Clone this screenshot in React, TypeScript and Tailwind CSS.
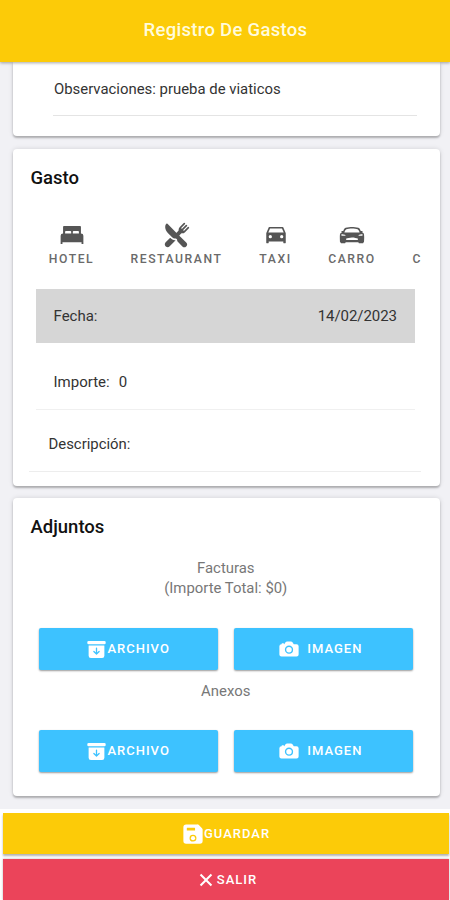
import type { ReactNode } from 'react'
import type { IconType } from 'react-icons'
import { IoArchive, IoBedSharp, IoCamera, IoCarSharp, IoCarSportSharp, IoCloseSharp, IoRestaurant, IoSave } from 'react-icons/io5'

const SEGMENTS: { label: string; Icon: IconType; width: string }[] = [
  { label: 'HOTEL',      Icon: IoBedSharp,      width: 'w-[78px]' },
  { label: 'RESTAURANT', Icon: IoRestaurant,    width: 'w-[132px]' },
  { label: 'TAXI',       Icon: IoCarSharp,      width: 'w-[66px]' },
  { label: 'CARRO',      Icon: IoCarSportSharp, width: 'w-[87px]' },
]

function Card({ className, children }: { className: string; children: ReactNode }) {
  return (
    <section className={`ml-[12.5px] mr-[10px] shrink-0 bg-white shadow-[0_2px_2px_rgba(0,0,0,0.24),0_0_5px_rgba(0,0,0,0.13)] ${className}`}>
      {children}
    </section>
  )
}

function AttachButtons() {
  return (
    <div className="ml-[26px] mr-[27px] grid grid-cols-2 gap-4 text-[13px] font-medium tracking-[1px] text-white">
      <button className="flex h-[42px] items-center justify-center rounded-[2px] bg-[#3dc2ff] shadow-[0_1px_2px_rgba(0,0,0,0.4)]">
        <IoArchive className="h-[21px] w-[21px]" />
        ARCHIVO
      </button>
      <button className="flex h-[42px] items-center justify-center rounded-[2px] bg-[#3dc2ff] pr-1.5 shadow-[0_1px_2px_rgba(0,0,0,0.4)]">
        <IoCamera className="mr-[7px] h-[22px] w-[22px]" />
        IMAGEN
      </button>
    </div>
  )
}

export default function App() {
  return (
    <div className="flex h-[900px] w-[450px] flex-col overflow-hidden bg-[#f1f1f5] font-['Roboto',sans-serif] text-[15px] text-[#333]">
      <header className="z-10 flex h-[62px] shrink-0 items-center justify-center bg-[#fccb08] pl-px shadow-[0_1px_3px_rgba(0,0,0,0.35)]">
        <h1 className="text-[18.5px] font-medium tracking-[0.3px] text-[#fffbdc]">Registro De Gastos</h1>
      </header>

      <main className="flex h-[747px] shrink-0 flex-col">
        <Card className="h-[74px] rounded-b-[4px]">
          <div className="ml-[40px] mr-[23px] flex h-[54px] items-center border-b border-[#e4e4e4] pl-[1.5px] pt-px text-[14.9px]">
            Observaciones: prueba de viaticos
          </div>
        </Card>

        {/* Gasto */}
        <Card className="mt-[13px] h-[337px] rounded-[4px]">
          <h2 className="h-[62px] pl-[18px] pt-[16px] text-[18.5px] font-medium leading-[26px] text-[#111]">Gasto</h2>
          <div className="ml-[20px] mr-[18px] flex h-[78px] overflow-hidden text-[12.2px] font-medium tracking-[1.55px] text-[#6a6a6a]">
            {SEGMENTS.map(({ label, Icon, width }) => (
              <div key={label} className={`flex shrink-0 flex-col items-center pt-[11px] ${width}`}>
                <Icon className="h-[26px] w-[26px] text-[#555]" />
                <span className="mt-[2px] leading-[18px]">{label}</span>
              </div>
            ))}
            <span className="ml-[17px] mt-[39px] leading-[18px]">C</span>
          </div>
          <div className="ml-[23px] mr-[25px] flex h-[54px] items-center justify-between bg-[#d6d6d6] px-[18px]">
            <span>Fecha:</span>
            <span className="tracking-[-0.05px]">14/02/2023</span>
          </div>
          <div className="ml-[23px] mr-[25px] flex h-[67px] items-center gap-[9px] border-b border-[#f0f0f0] pl-[18px] pt-[13px]">
            <span>Importe:</span>
            <span>0</span>
          </div>
          <div className="ml-[16px] mr-[19px] flex h-[62px] items-center border-b border-[#ededed] pl-5 pt-[7px] text-[14.9px]">Descripción:</div>
        </Card>

        {/* Adjuntos */}
        <Card className="mt-[12px] h-[298px] rounded-[4px]">
          <h2 className="h-[60px] pl-[18px] pt-[16px] text-[18.5px] font-medium leading-[26px] text-[#111]">Adjuntos</h2>
          <p className="h-[70px] pr-px text-center text-[14.9px] leading-[20px] text-[#777]">
            Facturas
            <br />
            (Importe Total: $0)
          </p>
          <AttachButtons />
          <p className="h-[60px] pr-px pt-[11px] text-center text-[14.9px] leading-[20px] text-[#777]">Anexos</p>
          <AttachButtons />
        </Card>
      </main>

      <footer className="flex shrink-0 flex-col gap-[5px] bg-white pl-[3px] pr-px pt-[4px] text-[13px] font-medium tracking-[1px] text-white">
        <button className="flex h-[41px] items-center justify-center bg-[#fccb08] shadow-[0_2px_2px_rgba(0,0,0,0.3)]">
          <IoSave className="h-[22px] w-[22px]" />
          GUARDAR
        </button>
        <button className="flex h-[41px] items-center justify-center bg-[#eb445a] shadow-[0_0_2px_rgba(0,0,0,0.3)]">
          <IoCloseSharp className="h-[22px] w-[22px]" />
          SALIR
        </button>
      </footer>
    </div>
  )
}
